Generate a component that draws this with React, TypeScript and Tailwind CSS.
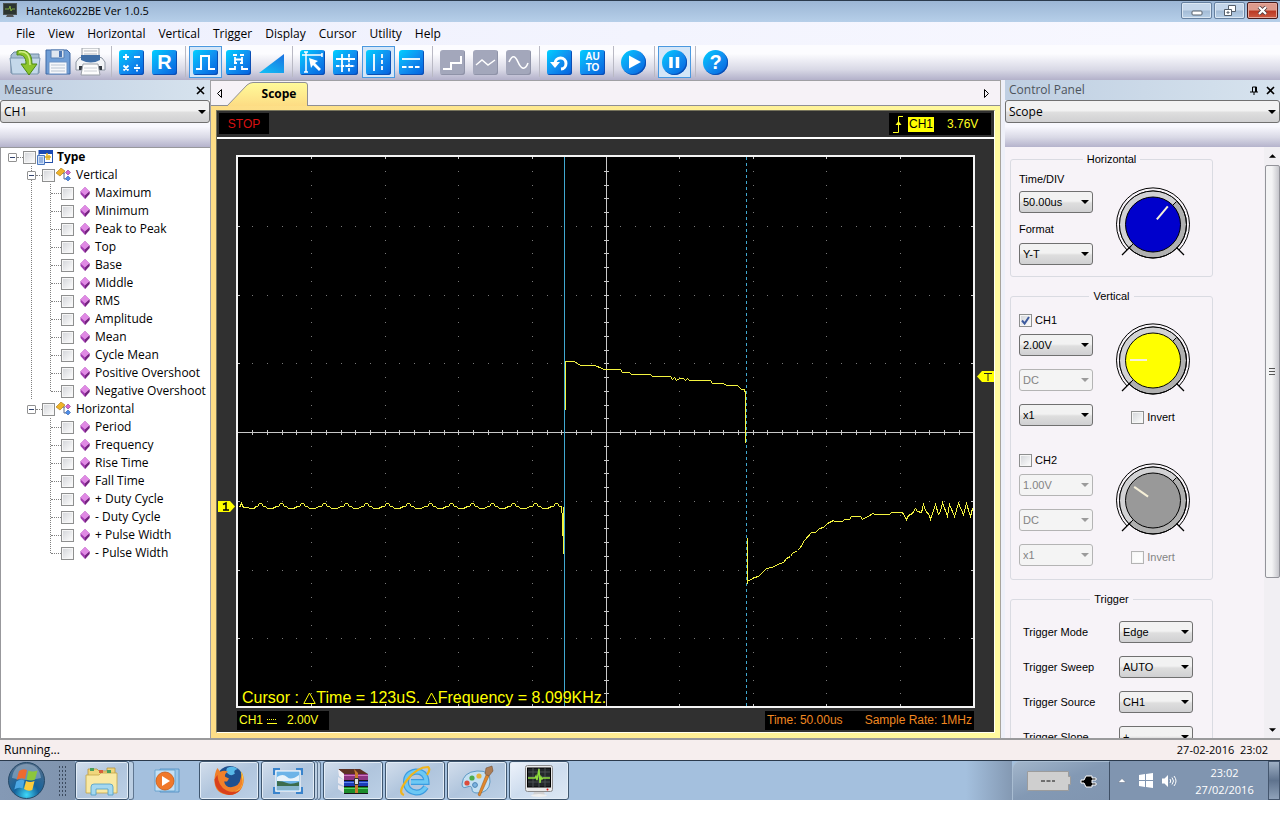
import type { ReactNode } from "react";
import clsx from "clsx";

const MENUS = ["File", "View", "Horizontal", "Vertical", "Trigger", "Display", "Cursor", "Utility", "Help"];

const VERTICAL_ITEMS = [
  "Maximum", "Minimum", "Peak to Peak", "Top", "Base", "Middle", "RMS", "Amplitude",
  "Mean", "Cycle Mean", "Positive Overshoot", "Negative Overshoot",
];
const HORIZONTAL_ITEMS = [
  "Period", "Frequency", "Rise Time", "Fall Time",
  "+ Duty Cycle", "- Duty Cycle", "+ Pulse Width", "- Pulse Width",
];

/* ---------- shared controls ---------- */

function Caret({ className }: { className?: string }) {
  return (
    <svg viewBox="0 0 8 4" className={clsx("pointer-events-none h-1 w-2", className)} fill="currentColor">
      <path d="M0 0h8L4 4z" />
    </svg>
  );
}

function Combo({ label, value, disabled, wide }: { label: string; value: string; disabled?: boolean; wide?: boolean }) {
  return (
    <div className={clsx("grid items-center", wide ? "h-[23px] w-full" : "h-[22px] w-[74px]")}>
      <select
        aria-label={label}
        disabled={disabled}
        defaultValue={value}
        className={clsx(
          "col-start-1 row-start-1 h-full w-full appearance-none rounded-[3px] border px-[3px] opacity-100",
          wide ? "font-['Open_Sans',sans-serif] text-[12px]" : "text-[11px]",
          disabled
            ? "border-[#b4b4b4] bg-[#f4f4f4] text-[#838383]"
            : "border-[#707070] bg-linear-to-b from-[#f2f2f2] from-45% via-[#dedede] via-55% to-[#d0d0d2] text-black",
        )}
      >
        <option>{value}</option>
      </select>
      <Caret className={clsx("col-start-1 row-start-1 mr-1 justify-self-end", disabled ? "text-[#9b9b9b]" : "text-black")} />
    </div>
  );
}

function Check({ label, checked, disabled, bare }: { label: string; checked?: boolean; disabled?: boolean; bare?: boolean }) {
  return (
    <label className={clsx("flex items-center leading-[14px]", !bare && "gap-[3px]", disabled ? "text-[#838383]" : "text-black")}>
      <span className="grid size-[13px] shrink-0">
        <input
          type="checkbox"
          aria-label={label}
          defaultChecked={checked}
          disabled={disabled}
          className={clsx(
            "peer col-start-1 row-start-1 size-[13px] appearance-none border bg-linear-to-br from-[#d2d4d8] to-white shadow-[inset_0_0_0_1px_#f6f6f6]",
            disabled ? "border-[#b4b4b4] from-[#f8f8f8]" : "border-[#8e8f8f]",
          )}
        />
        <svg viewBox="0 0 13 13" className="pointer-events-none col-start-1 row-start-1 hidden size-[13px] peer-checked:block">
          <path d="M3 6.5L5.6 9.5L10 3" fill="none" stroke="#3d5a9e" strokeWidth="2" />
        </svg>
      </span>
      {!bare && label}
    </label>
  );
}

/* ---------- title bar ---------- */

function ScopeLogo({ className }: { className?: string }) {
  return (
    <svg viewBox="0 0 28 32" className={className}>
      <rect x="0.5" y="0.5" width="27" height="26" rx="2" fill="#e9e9ea" stroke="#8a8a8c" />
      <rect x="2.5" y="3" width="23" height="19" fill="#23272a" stroke="#000" />
      <path d="M3 7h22M3 12h22M3 17h22M8 3v19M14 3v19M20 3v19" stroke="#4a5052" />
      <path d="M3 13h7l1-2 1 4 2-11 1 14 1-6 1 2 1-1h7" fill="none" stroke="#8fdc3c" strokeWidth="1.4" />
      <circle cx="22.500" cy="24.500" r="1" fill="#d11" />
      <path d="M9 27h10l1 3H8z" fill="#d0d0d2" />
      <ellipse cx="14" cy="30.500" rx="8" ry="1.500" fill="#efefef" />
    </svg>
  );
}

function TitleBar() {
  const btn = "flex h-[17px] w-[31px] items-center justify-center rounded-[2px] border border-[#66809f] bg-linear-to-b from-[#c4d6ea] from-45% via-[#a4bcd6] via-55% to-[#b8d0e8] shadow-[inset_0_0_0_1px_#dbe7f3]";
  return (
    <header className="flex h-[22px] items-start border-t border-[#2b3a4c] bg-linear-to-b from-[#9cb6d5] to-[#b6cfe9] pr-[2px] pl-[3px]">
      <svg viewBox="0 0 14 15" className="mt-[2px] h-[15px] w-[14px]">
        <rect x="0.500" y="0.500" width="13" height="11" fill="#2c3531" stroke="#4c5251" />
        <path d="M2 6h4l1-3 1 5 1-2h3" fill="none" stroke="#7fa83c" />
        <path d="M4 12h6l1 2H3z" fill="#555" />
      </svg>
      <h1 className="ml-[9px] text-[11px] leading-5">Hantek6022BE Ver 1.0.5</h1>
      <div className="mt-px ml-auto flex gap-[2px]">
        <button aria-label="Minimize" className={btn}>
          <svg viewBox="0 0 12 6" className="mt-1 h-[6px] w-3"><rect x="1" y="1" width="10" height="4" rx="1" fill="#fff" stroke="#555f6b" /></svg>
        </button>
        <button aria-label="Restore" className={btn}>
          <svg viewBox="0 0 12 11" className="h-[11px] w-3" fill="#fff" stroke="#555f6b">
            <path d="M4.500 .5h7v6h-7z" />
            <path d="M.5 4.500h7v6h-7z" />
            <path d="M3 7h2v1H3z" />
          </svg>
        </button>
        <button aria-label="Close" className="flex h-[17px] w-[31px] items-center justify-center rounded-[2px] border border-[#481a1a] bg-linear-to-b from-[#dc9a8c] from-45% via-[#bb3823] via-55% to-[#cc5a42] shadow-[inset_0_0_0_1px_#e6a99d]">
          <svg viewBox="0 0 11 9" className="h-[9px] w-[11px]" fill="none">
            <path d="M2 1l7 7M9 1L2 8" stroke="#4d3a3f" strokeWidth="3.800" />
            <path d="M2 1l7 7M9 1L2 8" stroke="#fff" strokeWidth="2.200" />
          </svg>
        </button>
      </div>
    </header>
  );
}

/* ---------- toolbar ---------- */

function Tool({ label, active, children }: { label: string; active?: boolean; children: ReactNode }) {
  return (
    <button
      aria-label={label}
      className={clsx(
        "flex h-8 w-[33px] shrink-0 items-center justify-center border",
        active ? "border-[#4a98e0] bg-[#d4e6f8]" : "border-transparent",
      )}
    >
      {children}
    </button>
  );
}

function Tile({ round, off, children }: { round?: boolean; off?: boolean; children: ReactNode }) {
  return (
    <span
      className={clsx(
        "flex size-[25px] items-center justify-center font-['Liberation_Sans',Arial,sans-serif] text-white",
        round ? "rounded-full" : "rounded-[3px]",
        off
          ? "bg-[#a3a7bb] shadow-[inset_-1px_-1px_0_#8f93a8]"
          : "bg-linear-to-br from-[#04d0ff] via-[#1290f0] to-[#0a5edc] shadow-[inset_-1px_-1px_0_#0c4fb4]",
      )}
    >
      {children}
    </span>
  );
}

function Glyph({ d, width = 2, dash }: { d: string; width?: number; dash?: string }) {
  return (
    <svg viewBox="0 0 25 25" className="size-[25px]" fill="none" stroke="currentColor" strokeWidth={width} strokeDasharray={dash}>
      <path d={d} />
    </svg>
  );
}

function Separator() {
  return <span className="mr-[3px] ml-1 h-[31px] w-px shrink-0 bg-[#b9b9c4]" />;
}

function Toolbar() {
  return (
    <div role="toolbar" className="flex h-[35px] items-start bg-linear-to-b from-[#fcfcff] from-25% via-[#d9d9e6] via-70% to-[#b3b1ca] pt-px pl-2">
      <Tool label="Open">
        <svg viewBox="0 0 32 27" className="h-[27px] w-8 shrink-0">
          <path d="M2 24V6l3-3h7l2 2h16v19z" fill="#a9bfd4" stroke="#6f8ba6" />
          <path d="M1 9h30l-2 16H3z" fill="#c4d8ea" stroke="#7b96b0" />
          <path d="M8 2c9-2 15 1 15 13h5l-8 11-8-11h5c0-7-3-10-9-9z" fill="#8cc42c" stroke="#4d8a14" />
          <path d="M10 3c7-1 11 2 11 13" fill="none" stroke="#d5ef8a" strokeWidth="1.500" />
        </svg>
      </Tool>
      <Tool label="Save">
        <svg viewBox="0 0 26 26" className="size-[26px]">
          <path d="M1 1h21l3 3v21H1z" fill="#6f9ed6" stroke="#3f68a4" />
          <path d="M6 1h13v8H6z" fill="#dfe7f0" stroke="#5980b4" />
          <path d="M14 2h3v6h-3z" fill="#4a76b4" />
          <path d="M4 13h18v12H4z" fill="#f6f8fb" stroke="#6f93c4" />
          <path d="M6 16h14M6 19h14M6 22h14" stroke="#b9c4d2" />
        </svg>
      </Tool>
      <Tool label="Print">
        <svg viewBox="0 0 31 28" className="h-7 w-[31px]">
          <path d="M7 0h17v11H7z" fill="#fafafa" stroke="#9aa0a8" />
          <path d="M9 3h13M9 6h13" stroke="#b4b9c0" />
          <path d="M4 10l3-1h17l3 1 3 4v8H1v-8z" fill="#f2f4f7" stroke="#8c95a2" />
          <path d="M6 7h19v5q-9 5-19 0z" fill="#3f6ea6" />
          <path d="M4 18h5v4H4zM22 18h5v4h-5z" fill="#343a42" />
          <path d="M8 16h15l2 11H6z" fill="#fdfdfd" stroke="#9aa0a8" />
          <path d="M9 20h13M9 23h13" stroke="#ccd0d6" />
        </svg>
      </Tool>
      <Separator />
      <Tool label="Math"><Tile><Glyph width={1.8} d="M4 7h6M7 4v6M15 7h6M4.500 15.500l5 5M9.500 15.500l-5 5M15 18h6M18 14.500v1.800M18 19.700v1.800" /></Tile></Tool>
      <Tool label="Reference"><Tile><span className="text-[20px] leading-none font-bold">R</span></Tile></Tool>
      <Separator />
      <Tool label="CH1" active><Tile><Glyph d="M3 19h5V6h8v13h6" /></Tile></Tool>
      <Tool label="CH2">
        <Tile>
          <svg viewBox="0 0 25 25" className="size-[25px]" fill="none" stroke="currentColor" strokeWidth="1.800">
            <path d="M7 5h4M14 5h4M9 9.500h7M9 7v6M16 7v6" />
            <path d="M3 19h6v-3M22 19h-6v-3" />
            <path d="M8 13h3M14 13h3" />
          </svg>
        </Tile>
      </Tool>
      <Tool label="Ramp">
        <svg viewBox="0 0 26 20" className="mt-1 h-5 w-[26px]">
          <defs>
            <linearGradient id="ramp" x1="1" y1="0" x2="0.300" y2="1">
              <stop offset="0" stopColor="#1a70e0" />
              <stop offset="1" stopColor="#12b8f4" />
            </linearGradient>
          </defs>
          <path d="M0 19L25 0v19z" fill="url(#ramp)" />
        </svg>
      </Tool>
      <Separator />
      <Tool label="Cursor track">
        <Tile>
          <svg viewBox="0 0 25 25" className="size-[25px]" fill="none" stroke="currentColor">
            <path d="M2 5h20M6 2v20M4 2h4M22 3v4M4 22h4" strokeWidth="1.500" />
            <path d="M9 8l9 3-3 2 6 6-2 2-6-6-2 3z" fill="currentColor" stroke="none" />
          </svg>
        </Tile>
      </Tool>
      <Tool label="Cross cursor">
        <Tile>
          <svg viewBox="0 0 25 25" className="size-[25px]" fill="none" stroke="currentColor" strokeWidth="1.800">
            <path d="M3 9h19M9 4v18" />
            <path d="M3 16h19M16 4v18" strokeDasharray="3.500 1.200" />
          </svg>
        </Tile>
      </Tool>
      <Tool label="Vertical cursor" active>
        <Tile>
          <svg viewBox="0 0 25 25" className="size-[25px]" fill="none" stroke="currentColor" strokeWidth="1.800">
            <path d="M8 4v17" />
            <path d="M16 4v17" strokeDasharray="4 2" />
          </svg>
        </Tile>
      </Tool>
      <Tool label="Horizontal cursor">
        <Tile>
          <svg viewBox="0 0 25 25" className="size-[25px]" fill="none" stroke="currentColor" strokeWidth="1.800">
            <path d="M3 9h18" />
            <path d="M3 17h18" strokeDasharray="4.500 2" />
          </svg>
        </Tile>
      </Tool>
      <Separator />
      <Tool label="Step"><Tile off><Glyph d="M3 19h8v-6h10V6" /></Tile></Tool>
      <Tool label="Linear"><Tile off><Glyph width={1.500} d="M3 15l6-5 6 5 7-5" /></Tile></Tool>
      <Tool label="Sine"><Tile off><Glyph width={1.600} d="M3 12C6 5 9 5 12 12s7 9 10 1" /></Tile></Tool>
      <Separator />
      <Tool label="Reset">
        <Tile>
          <svg viewBox="0 0 25 25" className="size-[25px]" fill="none" stroke="currentColor">
            <path d="M8 13a5.500 5.500 0 1 1 6 6" strokeWidth="3" />
            <path d="M3 12h10l-5 6z" fill="currentColor" stroke="none" />
          </svg>
        </Tile>
      </Tool>
      <Tool label="Auto set">
        <Tile>
          <span className="text-center text-[10px] leading-[11px] font-bold">AU<br />TO</span>
        </Tile>
      </Tool>
      <Separator />
      <Tool label="Start"><Tile round><svg viewBox="0 0 25 25" className="size-[25px]"><path d="M8 5.500v13l12-6.500z" fill="currentColor" /></svg></Tile></Tool>
      <Separator />
      <Tool label="Stop" active><Tile round><Glyph width={3.500} d="M9 7v11M15.500 7v11" /></Tile></Tool>
      <Separator />
      <Tool label="Help"><Tile round><span className="text-[20px] leading-none font-bold">?</span></Tile></Tool>
    </div>
  );
}

/* ---------- side panels ---------- */

function PanelHeader({ title, pin }: { title: string; pin?: boolean }) {
  return (
    <div className="flex h-5 shrink-0 items-center bg-linear-to-r from-[#bfcfe2] to-[#d7e3ee] pr-[5px] pl-1 text-[12px] text-[#4d545c]">
      <h2>{title}</h2>
      <div className="ml-auto flex items-center gap-2 text-black">
        {pin && (
          <button aria-label="Pin">
            <svg viewBox="0 0 8 9" className="h-[9px] w-2" fill="none" stroke="currentColor"><path d="M2.500 6V1h4v5M5.500 1v5M0 6h8M4 6v3" /></svg>
          </button>
        )}
        <button aria-label="Close panel">
          <svg viewBox="0 0 9 9" className="size-[9px]" fill="none" stroke="currentColor" strokeWidth="1.600"><path d="M1 1l7 7M8 1L1 8" /></svg>
        </button>
      </div>
    </div>
  );
}

function PanelBand() {
  return <div className="h-6 shrink-0 bg-linear-to-b from-[#f8f8fe] from-15% via-[#d9d9e6] via-60% to-[#b5b3cc]" />;
}

function Expander() {
  return (
    <button aria-label="Collapse" className="flex size-[9px] shrink-0 items-center justify-center rounded-[1px] border border-[#919191] bg-white">
      <span className="h-px w-[5px] bg-[#33446f]" />
    </button>
  );
}

function Gem() {
  return (
    <svg viewBox="0 0 10 12" className="ml-[6px] h-3 w-[10px] shrink-0">
      <path d="M5 0l4.500 4.500V7L5 12 .5 7V4.500z" fill="#a23cb0" />
      <path d="M5 0l4.500 4.500L5 8.500.5 4.500z" fill="#e08ae4" />
      <path d="M5 8.500l4.500-4V7L5 12z" fill="#74267f" />
    </svg>
  );
}

function BranchIcon() {
  return (
    <svg viewBox="0 0 15 14" className="mr-[5px] ml-px h-[14px] w-[15px] shrink-0">
      <path d="M6 5h3M8 5v6h3" fill="none" stroke="#5a6a8c" />
      <path d="M5 0l4 3-5 5-4-3z" fill="#f0b429" stroke="#a87410" strokeWidth=".6" />
      <path d="M12 2l2.500 2.500L12 7 9.500 4.500z" fill="#d667cf" stroke="#8c3a8c" strokeWidth=".6" />
      <path d="M12 8l2.500 2.500L12 13l-2.500-2.500z" fill="#4e8de8" stroke="#2a5cb0" strokeWidth=".6" />
    </svg>
  );
}

function Branch({ name, items, last }: { name: string; items: string[]; last?: boolean }) {
  return (
    <li className={clsx(!last && "bg-[linear-gradient(to_bottom,#808080_50%,transparent_50%)] bg-[length:1px_2px] bg-[position:31px_0] bg-repeat-y")}>
      <div className="flex h-[18px] items-center pl-[27px]">
        <Expander />
        <span className="w-[6px] border-t border-dotted border-[#808080]" />
        <Check bare label={name} />
        <BranchIcon />
        {name}
      </div>
      <ul className="bg-[linear-gradient(to_bottom,#808080_50%,transparent_50%)] bg-[length:1px_2px] bg-[position:50px_0] bg-repeat-y">
        {items.map((item) => (
          <li key={item} className="flex h-[18px] items-center pl-[51px] last:bg-[linear-gradient(white,white)] last:bg-[length:1px_9px] last:bg-[position:50px_9px] last:bg-no-repeat">
            <span className="w-[10px] border-t border-dotted border-[#808080]" />
            <Check bare label={item} />
            <Gem />
            <span className="ml-[5px] whitespace-nowrap">{item}</span>
          </li>
        ))}
      </ul>
    </li>
  );
}

function MeasurePanel() {
  return (
    <aside className="flex w-[210px] shrink-0 flex-col">
      <PanelHeader title="Measure" />
      <Combo wide label="Channel" value="CH1" />
      <PanelBand />
      <div className="min-h-0 flex-1 overflow-hidden border-t border-l border-[#98989c] bg-white text-[12px] leading-[18px]">
        <div className="-ml-px flex h-[18px] items-center pl-2">
          <Expander />
          <span className="w-[6px] border-t border-dotted border-[#808080]" />
          <Check bare label="Type" />
          <svg viewBox="0 0 16 15" className="mr-1 ml-px h-[15px] w-4 shrink-0">
            <rect x="2" y="0.500" width="13.500" height="12" fill="#fff" stroke="#2450a8" />
            <path d="M2 0h14v4H2z" fill="#1c4ab4" />
            <path d="M10 3v7M6 7h8M12 5v5" stroke="#e0b020" strokeWidth="1.500" />
            <path d="M.5 5.500h7v9h-7z" fill="#cfe0f8" stroke="#4a78c0" />
            <path d="M2 8h4M2 10h4M2 12h4" stroke="#5c86c8" />
          </svg>
          <strong>Type</strong>
        </div>
        <ul className="-ml-px">
          <Branch name="Vertical" items={VERTICAL_ITEMS} />
          <Branch name="Horizontal" items={HORIZONTAL_ITEMS} last />
        </ul>
      </div>
    </aside>
  );
}

function Knob({ color, angle, label }: { color: string; angle: number; label: string }) {
  return (
    <svg role="img" aria-label={label} viewBox="0 0 76 72" className="h-[72px] w-[76px]">
      <g fill="none" stroke="#000">
        <path d="M12 63A36.500 36.500 0 1 1 64 63" />
        <circle cx="38" cy="37.500" r="33.500" fill="#b0b0b0" />
        <path d="M62 14A33.500 33.500 0 0 0 14 61L18 57A28 28 0 0 1 58 18z" fill="#d2d2d4" stroke="none" />
        <circle cx="38" cy="37.500" r="33.500" />
        <circle cx="38" cy="37.500" r="27.500" fill={color} />
        <path d="M58 18l3.500-3.500M18 57l-3.500 3.500" />
        <path d="M16 59l-9 9M61.500 60.500l7.500 7.500" strokeWidth="1.300" />
      </g>
      <path d="M44 37h17" stroke="#f6f0d8" strokeWidth="2" transform={`rotate(${angle} 38 37)`} />
    </svg>
  );
}

function Group({ title, children }: { title: string; children: ReactNode }) {
  return (
    <fieldset className="w-[203px] rounded-[3px] border border-[#dadbe2]">
      <legend className="mx-auto px-1 leading-[14px]">{title}</legend>
      {children}
    </fieldset>
  );
}

function Channel({ name, volts, color, angle, on }: { name: string; volts: string; color: string; angle: number; on?: boolean }) {
  return (
    <div className="flex justify-between pr-[21px] pl-2">
      <div className="flex flex-col gap-[13px]">
        <div className="-mb-[6px] h-[14px]"><Check label={name} checked={on} /></div>
        <Combo label={`${name} volts per division`} value={volts} disabled={!on} />
        <Combo label={`${name} coupling`} value="DC" disabled />
        <Combo label={`${name} probe`} value="x1" disabled={!on} />
      </div>
      <div className="flex flex-col items-center gap-[15px] pt-[10px]">
        <Knob label={`${name} volts knob`} color={color} angle={angle} />
        <Check label="Invert" disabled={!on} />
      </div>
    </div>
  );
}

function ScrollBar() {
  return (
    <div className="flex w-4 shrink-0 flex-col items-center bg-[#f1eff3]">
      <Caret className="my-[7px] w-[7px] rotate-180" />
      <div className="flex h-[413px] w-[15px] shrink items-center justify-center rounded-[2px] border border-[#93939a] bg-linear-to-r from-[#f4f4f5] from-45% to-[#c6c6cc]">
        <span className="h-[7px] w-[6px] bg-[repeating-linear-gradient(#555_0_1px,transparent_1px_3px)]" />
      </div>
      <Caret className="mt-auto mb-[6px] w-[7px]" />
    </div>
  );
}

function ControlPanel() {
  const triggers = [["Trigger Mode", "Edge"], ["Trigger Sweep", "AUTO"], ["Trigger Source", "CH1"], ["Trigger Slope", "+"]];
  return (
    <aside className="flex w-[280px] shrink-0 flex-col border-l border-[#a8a49c] bg-[#eef0f8] pl-1">
      <PanelHeader title="Control Panel" pin />
      <Combo wide label="Panel" value="Scope" />
      <PanelBand />
      <div className="flex min-h-0 flex-1 overflow-hidden bg-[#f7f3f8] font-['Liberation_Sans',Arial,sans-serif] text-[11px]">
        <div className="flex min-w-0 flex-1 flex-col gap-3 pt-[5px] pl-[5px]">
          <Group title="Horizontal">
            <div className="flex items-start justify-between pr-[21px] pb-[11px] pl-2">
              <div className="flex flex-col pt-[6px] leading-[14px]">
                <span className="mb-[5px]">Time/DIV</span>
                <Combo label="Time/DIV" value="50.00us" />
                <span className="mt-[9px] mb-[7px]">Format</span>
                <Combo label="Format" value="Y-T" />
              </div>
              <div className="pt-[21px]"><Knob label="Time knob" color="#0000cc" angle={-50} /></div>
            </div>
          </Group>
          <Group title="Vertical">
            <div className="flex flex-col gap-[27px] pt-[10px] pb-[13px]">
              <Channel name="CH1" volts="2.00V" color="#ffff00" angle={180} on />
              <Channel name="CH2" volts="1.00V" color="#999999" angle={215} />
            </div>
          </Group>
          <Group title="Trigger">
            <div className="flex flex-col gap-[13px] pt-[15px] pr-[19px] pb-3 pl-3">
              {triggers.map(([name, value]) => (
                <div key={name} className="flex items-center justify-between">
                  <span>{name}</span>
                  <Combo label={name} value={value} />
                </div>
              ))}
            </div>
          </Group>
        </div>
        <ScrollBar />
      </div>
    </aside>
  );
}

/* ---------- scope ---------- */

const W = 735;
const H = 549;

const RIPPLE_PEAKS = [22, 43, 64, 86, 108, 128, 149, 170, 192, 213, 234, 254, 275, 297];
const RIPPLE =
  "M1 350L3 346L5 350H9L12 351H16" +
  RIPPLE_PEAKS.map((x) => `L${x - 5} 349H${x - 3}L${x - 1} 346H${x + 1}L${x + 3} 349H${x + 5}L${x + 7} 351H${x + 12}`).join("") +
  "L313 349H315L317 346H319L321 349H323L324 362L325 395";

const PULSE =
  "M327 252V204H336L342 208H356L364 211L365 212H382L384 215H391L393 217H412L414 219H432L434 222L436 220L438 223L441 221H445L447 223L449 221L451 223H472L474 226H485L488 228H499L503 232H506L507 236V285";

const TAIL =
  "M509 380V426L509 424L516 420L520 419L528 411L534 410L539 407L545 405L548 401L552 399L554 396L559 393L562 390L566 383L573 375H577L581 371L585 370L589 366L595 363L596 364H604L606 362H611L613 359H622L624 362L627 360L630 359L634 356L637 357H651L653 355H664L668 362L670 358L674 356L677 351L679 354L683 355L685 347L687 353L691 358L692 362L697 347L700 357L702 354L704 345L709 359L711 347L716 359L720 346L725 357L728 346L732 359L734 351";

function gridDots() {
  const dots: string[] = [];
  for (let col = 1; col < 10; col++) {
    if (col === 5) continue;
    for (let i = 1; i < 40; i++) dots.push(`M${Math.floor(col * 73.6)} ${Math.round(i * 13.75)}h1`);
  }
  for (let row = 1; row < 8; row++) {
    if (row === 4) continue;
    for (let i = 1; i < 50; i++) dots.push(`M${Math.floor(i * 14.72)} ${Math.round(row * 68.75)}h1`);
  }
  return dots.join("");
}

function axisTicks() {
  const ticks: string[] = [];
  for (let i = 1; i < 50; i++) {
    const x = Math.floor(i * 14.72) + 0.5;
    ticks.push(`M${x} 273v5`);
    if (i % 5 === 0) ticks.push(`M${x} 0v2M${x} ${H}v-2`);
  }
  for (let i = 1; i < 40; i++) {
    const y = Math.round(i * 13.75) + 0.5;
    ticks.push(`M366 ${y}h5`);
    if (i % 5 === 0) ticks.push(`M0 ${y}h2M${W} ${y}h-2`);
  }
  return ticks.join("");
}

function Delta() {
  return (
    <svg viewBox="0 0 13 12" className="h-3 w-[13px]" fill="none" stroke="currentColor"><path d="M.8 11.500L6.500 1l5.700 10.500z" /></svg>
  );
}

function Plot() {
  return (
    <div className="relative min-w-0 flex-1 border-2 border-[#f4f4f4] bg-black">
      <svg viewBox={`0 0 ${W} ${H}`} preserveAspectRatio="none" className="absolute inset-0 h-full w-full" fill="none" shapeRendering="crispEdges">
        <path d={gridDots()} stroke="#7a7a7a" transform="translate(0 .5)" />
        <path d={`M0 275.500H${W}M368.500 0V${H}`} stroke="#c8c8c8" />
        <path d={axisTicks()} stroke="#c8c8c8" />
        <path d={`M326.500 0V${H}`} stroke="#40a8d0" />
        <path d={`M508.500 0V${H}`} stroke="#40a8d0" strokeDasharray="3 3" />
        <g stroke="#f4f440" transform="translate(.5 .5)">
          <path d={RIPPLE} />
          <path d="M325 380V396V349" />
          <path d={PULSE} />
          <path d={TAIL} />
        </g>
      </svg>
      <p className="absolute -bottom-px left-1 flex items-center text-[16px] leading-[18px] whitespace-pre text-[#ffff00]">
        Cursor : <Delta />Time = 123uS. <Delta />Frequency = 8.099KHz.
      </p>
    </div>
  );
}

function ScopeView() {
  return (
    <main className="flex min-w-0 flex-1 flex-col border-t border-l border-[#a0a0a4] bg-[#f6f2f7]">
      <div className="flex h-[25px] items-stretch border-b border-[#8f8f94] pr-[11px] pl-[6px]">
        <button aria-label="Previous tab">
          <svg viewBox="0 0 5 9" className="h-[9px] w-[5px]" fill="none" stroke="#000"><path d="M4.500 .5v8L.5 4.500z" /></svg>
        </button>
        <button className="-mb-px ml-[5px] grid w-[81px] pt-px">
          <svg viewBox="0 0 81 24" className="col-start-1 row-start-1 h-6 w-[81px]">
            <defs>
              <linearGradient id="tab" x1="0" y1="0" x2="0" y2="1">
                <stop offset="0" stopColor="#fffb9a" />
                <stop offset="1" stopColor="#fddc84" />
              </linearGradient>
            </defs>
            <path d="M0 24L20 3Q23 .5 26 .5H78Q80.500 .5 80.500 3V24" fill="url(#tab)" stroke="#8f8f94" />
          </svg>
          <strong className="z-10 col-start-1 row-start-1 self-center pl-[23px] text-[12px]">Scope</strong>
        </button>
        <button aria-label="Next tab" className="ml-auto">
          <svg viewBox="0 0 5 9" className="h-[9px] w-[5px]" fill="none" stroke="#000"><path d="M.5 .5v8l4-4z" /></svg>
        </button>
      </div>

      <div className="flex min-h-0 flex-1 flex-col bg-linear-to-r from-[#fddd86] to-[#fffa9e] px-[5px] pt-1 pb-[5px] font-['Liberation_Sans',Arial,sans-serif] text-[12px]">
        <div className="flex min-h-0 flex-1 flex-col border border-t-[#77745c] border-r-[#fffff0] border-b-[#fffff0] border-l-[#77745c] bg-[#303030]">
          <div className="flex h-[28px] items-start justify-between border-b-2 border-white pt-[2px] pr-[3px] pl-[2px]">
            <span className="flex h-[21px] w-[50px] items-center justify-center bg-black text-[#d81010]">STOP</span>
            <div className="flex h-[22px] w-[102px] items-center bg-black pl-1 text-[#ffff20]">
              <svg viewBox="0 0 10 17" className="h-[17px] w-[10px]" fill="none" stroke="currentColor"><path d="M0 16.500h5.500V.5H10" /><path d="M2.500 9h6l-3-4z" fill="currentColor" stroke="none" /></svg>
              <span className="ml-[5px] bg-[#ffff00] px-px leading-[15px] text-black">CH1</span>
              <span className="ml-[13px]">3.76V</span>
            </div>
          </div>
          <div className="flex min-h-0 flex-1 pt-4">
            <div className="relative w-[19px]">
              <svg viewBox="0 0 17 11" className="absolute top-5/8 left-px h-[11px] w-[17px]"><path d="M0 0h12l5 5.500L12 11H0z" fill="#ff0" /><path d="M5 3.500L8 2v7M5 9h6" fill="none" stroke="#000" strokeWidth="1.500" /></svg>
            </div>
            <Plot />
            <div className="relative w-[19px]">
              <svg viewBox="0 0 17 11" className="absolute top-[39%] left-[2px] h-[11px] w-[17px]"><path d="M17 0H5L0 5.500 5 11h12z" fill="#ff0" /><path d="M7 2.500h8M11 2v8" fill="none" stroke="#222" /></svg>
            </div>
          </div>
          <div className="flex justify-between px-5 pt-[3px] pb-[2px] leading-[19px]">
            <span className="flex w-[92px] items-center bg-black pl-[2px] text-[#ffff20]">
              CH1
              <svg viewBox="0 0 10 6" className="ml-1 h-[6px] w-[10px]" fill="none" stroke="currentColor"><path d="M0 1.500h10" strokeDasharray="1 1" /><path d="M0 5.500h10" /></svg>
              <span className="ml-[10px]">2.00V</span>
            </span>
            <span className="flex w-[209px] justify-between bg-black px-[2px] text-[#f08820]">
              <span>Time: 50.00us</span>
              <span>Sample Rate: 1MHz</span>
            </span>
          </div>
        </div>
      </div>
    </main>
  );
}

/* ---------- taskbar ---------- */

function Task({ label, wide = true, active, children }: { label: string; wide?: boolean; active?: boolean; children: ReactNode }) {
  return (
    <button
      aria-label={label}
      className={clsx(
        "flex items-center justify-center rounded-[3px] border border-[#3f566f] shadow-[inset_0_0_0_1px_#e3edf7]",
        wide ? "w-[60px]" : "w-[54px]",
        active ? "bg-linear-to-br from-[#eef3fb] via-[#cddcee] to-[#dde8f4]" : "bg-linear-to-br from-[#d3deec] via-[#b0c5dd] to-[#bcd0e6]",
      )}
    >
      {children}
    </button>
  );
}

function Taskbar() {
  return (
    <footer className="flex h-10 shrink-0 border-t border-[#2b3a4c] bg-[#a4c0de] text-white">
      <div className="flex w-[75px] items-center bg-linear-to-r from-[#8499b5] to-[#8094ae] pl-2">
        <button aria-label="Start">
          <svg viewBox="0 0 37 37" className="size-[37px]">
            <defs>
              <radialGradient id="orb" cx=".5" cy=".9" r=".85">
                <stop offset="0" stopColor="#3fd8f8" />
                <stop offset=".4" stopColor="#14639c" />
                <stop offset="1" stopColor="#4e6c8c" />
              </radialGradient>
            </defs>
            <circle cx="18.500" cy="18.500" r="18" fill="url(#orb)" stroke="#274a68" />
            <path d="M4 16Q6 2 18.500 2T33 16Q18 20 4 16z" fill="#c9d8e6" opacity=".4" />
            <path d="M11 9q4-3 8-1l-2 9q-4-2-8.500 1z" fill="#ee6a30" />
            <path d="M20.500 8.500q4 2 9 0l-2.500 9q-4 2-8.500 0z" fill="#8cc63c" />
            <path d="M8.300 19.500q4-3 8.300-1l-2 8q-4-2-8.300 1z" fill="#4ca8e4" />
            <path d="M18 19q4 2 8.500 0l-2.200 9q-4 2-8.300-1z" fill="#fccb3c" />
          </svg>
        </button>
        <span className="ml-[13px] h-8 w-2 bg-[radial-gradient(#3b4a5e_1px,transparent_1px)] bg-[length:3px_4px]" />
      </div>
      <Task label="Explorer" wide={false}>
        <svg viewBox="0 0 34 30" className="h-[30px] w-[34px]">
          <path d="M3 3h9l2 2h8V2h8v24H3z" fill="#f0d67c" stroke="#b8963c" strokeWidth=".8" />
          <path d="M1 9h13l2-2h16v20H1z" fill="#f9e9a4" stroke="#c4a448" strokeWidth=".8" />
          <path d="M5 2h4v3H5zM22 4h4v3h-4z" fill="#4aa05c" />
          <path d="M14 4h4v3h-4z" fill="#d8603c" />
          <path d="M6 29V21q0-3 3-3h16q3 0 3 3v8h-5v-6H11v6z" fill="#a4d8f0" stroke="#4c9cc4" strokeWidth=".8" />
        </svg>
      </Task>
      <span className="mr-px w-[5px] rounded-r-[3px] border border-l-0 border-[#5f7690] bg-[#bccfe3]" />
      <button aria-label="Media player" className="flex w-16 items-center justify-center">
        <svg viewBox="0 0 27 26" className="h-[26px] w-[27px]">
          <path d="M6 1h19v23H6z" fill="#9cc8ea" stroke="#4c8cc0" strokeWidth=".8" />
          <path d="M1 2h20v21H1z" fill="#c4e0f4" stroke="#5c9ccc" strokeWidth=".8" />
          <circle cx="11" cy="13" r="9" fill="#f0782a" stroke="#c4520c" strokeWidth=".7" />
          <path d="M8 8v10l8-5z" fill="#fff" />
        </svg>
      </button>
      <Task label="Firefox">
        <svg viewBox="0 0 32 32" className="h-[31px] w-8">
          <circle cx="17" cy="14.500" r="13.500" fill="#20508f" />
          <path d="M14 3q6-3 11 1-5 1-3 5-4 3-7 0-3-2-1-6z" fill="#58b8e8" />
          <path d="M29 7q3 6 2 11-2 12-15 13Q1 30 1 16 1 8 4 3l3 4q4-2 8 0-4 2-3 5l4 2-2 3h-3q1 6 7 6 9-1 10-9 1-4 1-7z" fill="#f0802a" />
          <path d="M1 15Q2 29 16 31q8 0 12-6-8 5-15 1Q5 22 4 10z" fill="#d8401c" />
          <path d="M28 6q4 6 2 13-2 8-9 9 9-3 9-12-1-6-2-10z" fill="#fcd03c" />
        </svg>
      </Task>
      <span className="w-[2px]" />
      <Task label="Photo viewer" wide={false}>
        <svg viewBox="0 0 30 26" className="h-[26px] w-[30px]">
          <path d="M3 3h24v20H3z" fill="#6cb4e8" stroke="#fff" />
          <path d="M4 9q6-4 10 0t12-2v6H4z" fill="#e8f3fa" />
          <path d="M4 13q6 0 10 2t12-1v4H4z" fill="#3c6c4c" />
          <path d="M4 18h22v4H4z" fill="#86b4cc" />
          <path d="M1 7V1h6M23 1h6v6M29 19v6h-6M7 25H1v-6" fill="none" stroke="#3a84cc" strokeWidth="2" />
        </svg>
      </Task>
      <span className="w-[3px] rounded-r-[3px] border border-l-0 border-[#5f7690] bg-[#bccfe3]" />
      <span className="mr-[2px] w-[3px] rounded-r-[3px] border border-l-0 border-[#5f7690] bg-[#bccfe3]" />
      <div className="flex gap-[2px]">
        <Task label="WinRAR">
          <svg viewBox="0 0 34 26" className="h-[26px] w-[34px]">
            <path d="M2 1h22l8 5H8z" fill="#5c3024" />
            <path d="M2 1l6 5v6L3 8z" fill="#f4f0f4" />
            <path d="M8 6h24v6H8z" fill="#8c3480" />
            <path d="M8 7.500h24" stroke="#d078c0" />
            <path d="M2 9l6 3v6l-6-3zM2 17l6 2v6l-6-4z" fill="#e8e8f0" />
            <path d="M8 13h24v5H8z" fill="#1c3cb8" />
            <path d="M8 14.500h24" stroke="#5c88f0" />
            <path d="M8 19h24v6H8z" fill="#1c8c2c" />
            <path d="M8 20.500h24" stroke="#5cd468" />
            <path d="M8 12.500h24M8 18.500h24M8 25.500h24" stroke="#15151a" />
            <path d="M18 1l4 4v20h-3V5z" fill="#c87c2c" />
            <path d="M18.500 10.500h4v6h-4z" fill="#e0e0e0" stroke="#333" />
          </svg>
        </Task>
        <Task label="Internet Explorer">
          <svg viewBox="0 0 32 32" className="h-8 w-8" fill="none">
            <path d="M27 22Q23 28 17 27.500 7 26 7 17T17 6.500q10 0 10.500 10.500H12" stroke="#3c9ce0" strokeWidth="6" />
            <path d="M27 22Q23 28 17 27.500 7 26 7 17T17 6.500q10 0 10.500 10.500H12" stroke="#6cc8f4" strokeWidth="3.600" />
            <path d="M5 30Q-2 28 8 15T29 2q3 2-1 8" stroke="#f0b41c" strokeWidth="2.200" />
          </svg>
        </Task>
        <Task label="Paint">
          <svg viewBox="0 0 34 32" className="h-8 w-[34px]">
            <path d="M2 19Q3 7 17 6t13 11q-1 11-13 11-5 0-5-4t-5-2-5-3z" fill="#c4e0f2" stroke="#5c98c4" />
            <circle cx="7" cy="18" r="2.600" fill="#dc4c3c" />
            <circle cx="12" cy="13" r="2.600" fill="#4cac4c" />
            <circle cx="19" cy="11" r="2.600" fill="#e8b43c" />
            <circle cx="15" cy="20" r="2.400" fill="#7cb4e0" stroke="#4c84b4" />
            <path d="M26 10l3 1-9 20-2-1z" fill="#e0882c" stroke="#9c5414" strokeWidth=".5" />
            <path d="M25 9l1-6 6-2 1 5-4 5z" fill="#ac7c54" stroke="#6c4424" strokeWidth=".5" />
          </svg>
        </Task>
        <Task label="Hantek6022BE" active><ScopeLogo className="h-8 w-7" /></Task>
      </div>

      <div className="ml-auto w-[46px] bg-linear-to-r from-[#a4c0de] to-[#8499b3]" />
      <div className="flex w-[98px] items-center gap-[9px] rounded-tl-lg border-t border-r border-l border-t-[#a9bdd2] border-r-[#3f5066] border-l-[#a9bdd2] bg-linear-to-br from-[#a3b6cb] via-[#8399b4] to-[#8095b0] pl-[14px]">
        <svg viewBox="0 0 44 20" className="h-5 w-11">
          <path d="M.5 .5h41v5h2v8h-2v6H.5z" fill="#cfcfcf" stroke="#9c9c9c" />
          <path d="M14 10h4M19.500 10h4M25 10h3" stroke="#111" />
        </svg>
        <svg viewBox="0 0 17 14" className="h-[14px] w-[17px]" fill="#000" stroke="#fff">
          <path d="M1 6h3l2-4h6v2h4v2h-4v3h4v2h-4v2H6L4 9H1z" />
        </svg>
      </div>
      <div className="flex w-[158px] items-center bg-[#8095b0] pl-2">
        <button aria-label="Show hidden icons">
          <svg viewBox="0 0 8 5" className="h-[5px] w-2"><path d="M0 4.500L4 .5l4 4z" fill="#fff" stroke="#5a6b82" strokeWidth=".5" /></svg>
        </button>
        <svg viewBox="0 0 14 15" className="ml-[13px] h-[15px] w-[14px]" fill="#fff"><path d="M0 2l6-1v6H0zM7 1l7-1v7H7zM0 8h6v6l-6-1zM7 8h7v7l-7-1z" /></svg>
        <svg viewBox="0 0 15 14" className="ml-[9px] h-[14px] w-[15px]" fill="none" stroke="#fff">
          <path d="M0 4.500h2.500L6 1v12L2.500 9.500H0z" fill="#fff" stroke="none" />
          <path d="M8 5q1.500 2 0 4M10 3.500q3 3.500 0 7M12 2q4 5 0 10" />
        </svg>
        <div className="flex-1 pl-1 text-center text-[11px] leading-[17px]">
          <div>23:02</div>
          <div>27/02/2016</div>
        </div>
      </div>
      <button aria-label="Show desktop" className="w-3 border border-[#44566e] bg-linear-to-b from-[#9fb0c4] via-[#5f738e] to-[#8fa2ba]" />
    </footer>
  );
}

export default function App() {
  return (
    <div className="flex h-screen flex-col overflow-hidden bg-white pb-[27px] font-['Open_Sans','Noto_Sans',sans-serif] text-black">
      <TitleBar />
      <nav className="flex h-[23px] shrink-0 items-center gap-[13px] bg-linear-to-r from-[#eef0fd] to-[#f8f8ff] pl-4 text-[12px]">
        {MENUS.map((menu) => (
          <a key={menu} href="#" className="leading-5">{menu}</a>
        ))}
      </nav>
      <Toolbar />
      <div className="flex min-h-0 flex-1">
        <MeasurePanel />
        <ScopeView />
        <ControlPanel />
      </div>
      <div className="flex h-[22px] shrink-0 items-center justify-between border-t-2 border-[#9a9a9c] bg-[#f6eeee] pr-3 pl-1">
        <span className="text-[12px]">Running...</span>
        <span className="text-[11px] whitespace-pre">27-02-2016  23:02</span>
      </div>
      <Taskbar />
    </div>
  );
}
